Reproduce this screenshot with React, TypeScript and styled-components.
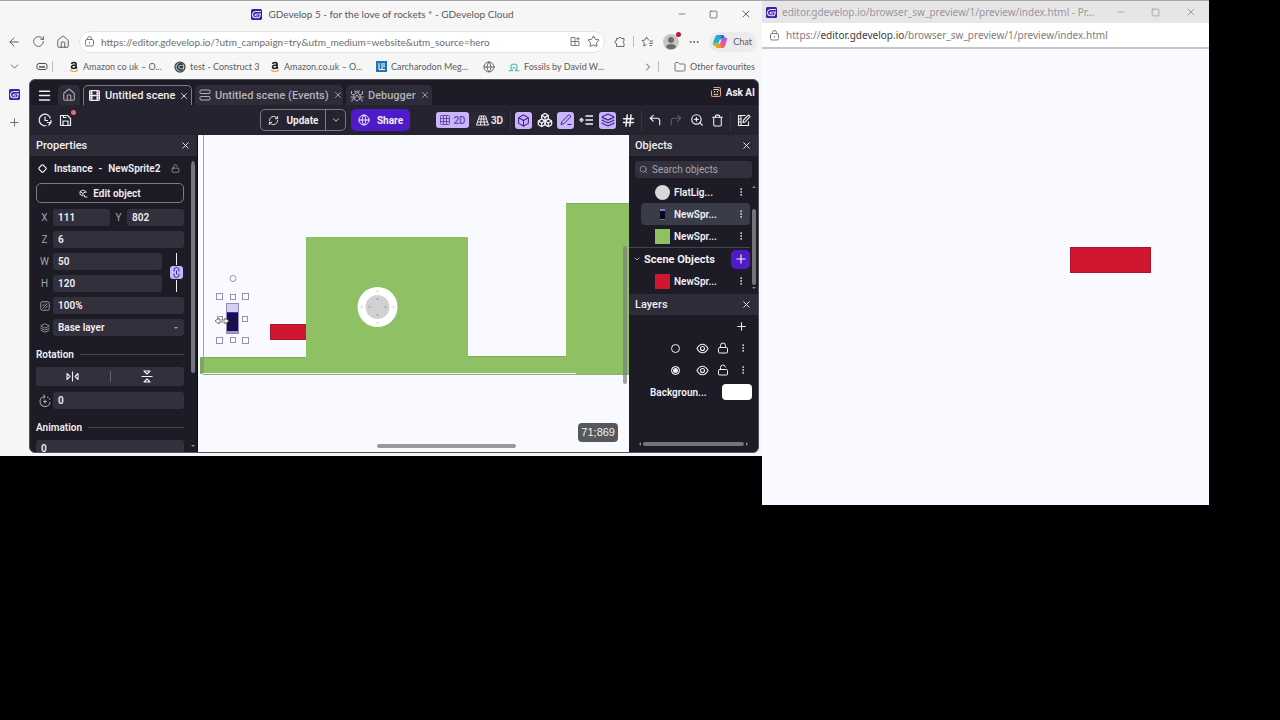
import React from "react";
import styled, { createGlobalStyle, css } from "styled-components";
import {
  Menu, House, Film, X, ChevronDown, ChevronRight, Globe, Grid3x3, Box, Boxes, Layers, Hash,
  CornerUpLeft, CornerUpRight, ZoomIn, Trash, Plus, Lock, LockOpen, Search, Star, ArrowLeft,
  RotateCw, Folder, Square, Minus, RefreshCw, EllipsisVertical, Ellipsis, Diamond,
} from "lucide-react";

const c = {
  chrome: "#f6f6f7",
  chromeText: "#5b5b5e",
  panel: "#1d1b26",
  bar: "#25232f",
  header: "#2e2c38",
  field: "#32303c",
  text: "#f0eff5",
  muted: "#a5a3ae",
  line: "#46444f",
  lilac: "#c9b6fa",
  purple: "#4f1bc9",
  ink: "#43228c",
  green: "#8fc063",
  red: "#d11730",
  scene: "#f9faff",
};

const Global = createGlobalStyle`
  *, *::before, *::after { box-sizing: border-box; }
  body { margin: 0; background: #000; font-family: "Noto Sans", sans-serif; }
  button, input, select { font: inherit; color: inherit; margin: 0; }
  button { border: 0; padding: 0; background: none; display: inline-flex; align-items: center; justify-content: center; }
  h1, h2, h3 { margin: 0; font: inherit; }
  svg { display: block; flex: none; }
  a { color: inherit; text-decoration: none; }
`;

/* ---------- desktop and windows ---------- */

const Desktop = styled.main`
  display: flex;
  align-items: flex-start;
  min-height: 100vh;
  background: #000;
`;
const EditorWindow = styled.section`
  flex: 762 1 0;
  min-width: 0;
  background: ${c.chrome};
  border-top: 1px solid #a8a5a8;
  color: ${c.chromeText};
  font-family: Lato, "Noto Sans", sans-serif;
`;
const PreviewWindow = styled.section`
  flex: 447 1 0;
  min-width: 0;
  background: ${c.scene};
  border-top: 1px solid #a8a5a8;
`;
const DesktopMargin = styled.div`
  flex: 71 1 0;
`;

const TitleBar = styled.header`
  display: flex;
  align-items: center;
  height: 26px;
  padding: 0 10px 0 88px;
  font-size: 10px;
`;
const TitleText = styled.h1`
  flex: 1;
  display: flex;
  align-items: center;
  justify-content: center;
  gap: 6px;
  white-space: nowrap;
  color: #58585b;
`;
const WindowButtons = styled.div<{ $gap: number }>`
  display: flex;
  gap: ${(p) => p.$gap}px;
`;
const AddressRow = styled.div`
  display: flex;
  align-items: center;
  height: 29px;
  padding: 0 5px 0 7px;
  gap: 9px;
`;
const AddressPill = styled.label`
  flex: 1;
  min-width: 0;
  display: flex;
  align-items: center;
  gap: 6px;
  height: 22px;
  padding: 0 4px;
  border: 1px solid #e4e4e6;
  border-radius: 11px;
  background: #fff;
`;
const AddressInput = styled.input`
  flex: 1;
  min-width: 0;
  border: 0;
  padding: 0;
  outline: 0;
  background: none;
  font-size: 10px;
  color: #6c6c6f;
`;
const Rule = styled.span`
  width: 1px;
  height: 11px;
  background: #bdbdc0;
`;
const ChromeGroup = styled.div<{ $gap: number }>`
  display: flex;
  align-items: center;
  gap: ${(p) => p.$gap}px;
`;
const Avatar = styled.button`
  position: relative;
  width: 16px;
  height: 16px;
  border-radius: 8px;
  background: #c9c7c6;
  overflow: visible;
`;
const Dot = styled.span<{ $color: string }>`
  position: absolute;
  top: -2px;
  right: -2px;
  width: 5px;
  height: 5px;
  border-radius: 3px;
  background: ${(p) => p.$color};
`;
const ChatButton = styled.button`
  height: 20px;
  padding: 0 5px 0 3px;
  gap: 5px;
  border-radius: 10px;
  background: #ebebec;
  font-size: 9px;
`;
const Bookmarks = styled.nav`
  display: flex;
  align-items: center;
  height: 23px;
  padding: 0 12px 2px 8px;
  font-size: 9px;
  white-space: nowrap;
`;
const Bookmark = styled.a<{ $width: number }>`
  display: flex;
  align-items: center;
  gap: 4px;
  flex: ${(p) => p.$width} 0 0;
  min-width: 0;
`;
const WindowBody = styled.div`
  display: flex;
  padding: 0 3px 3px 0;
`;
const VerticalTabs = styled.nav`
  width: 29px;
  display: flex;
  flex-direction: column;
  align-items: center;
  gap: 16px;
  padding-top: 10px;
`;

/* ---------- editor ---------- */

const Editor = styled.div`
  flex: 1;
  min-width: 0;
  display: flex;
  flex-direction: column;
  height: 374px;
  border: 1px solid #53515a;
  border-radius: 6px;
  overflow: hidden;
  background: ${c.panel};
  color: ${c.text};
  font-family: Roboto, "Noto Sans", sans-serif;
  font-size: 10px;
  font-weight: 600;
`;
const TabsRow = styled.div`
  display: flex;
  align-items: flex-end;
  height: 25px;
  gap: 3px;
  padding-left: 3px;
  font-size: 11px;
  font-weight: 500;
`;
const IconTab = styled.button<{ $tab?: boolean }>`
  width: 22px;
  height: 20px;
  border-radius: 5px 5px 0 0;
  background: ${(p) => (p.$tab ? c.header : "none")};
  color: ${(p) => (p.$tab ? c.muted : c.text)};
`;
const Tab = styled.div<{ $active?: boolean; $width: number }>`
  display: flex;
  align-items: center;
  width: ${(p) => p.$width}px;
  height: 20px;
  padding: 0 4px;
  gap: 4px;
  border-radius: 5px 5px 0 0;
  white-space: nowrap;
  background: ${(p) => (p.$active ? c.bar : c.header)};
  color: ${(p) => (p.$active ? c.text : "#b3b1bc")};
  ${(p) => p.$active && css`border: 1px solid #7c7a86; border-bottom: 0;`}
`;
const TabLabel = styled.button`
  flex: 1;
  justify-content: flex-start;
  gap: 4px;
`;
const AskAi = styled.button`
  margin: 0 3px 7px auto;
  gap: 4px;
  font-size: 10px;
  font-weight: 700;
`;
const Toolbar = styled.div`
  display: flex;
  align-items: center;
  height: 30px;
  padding: 0 6px 0 6px;
  background: ${c.bar};
`;
const ToolGroup = styled.div<{ $gap?: number; $push?: boolean }>`
  display: flex;
  align-items: center;
  gap: ${(p) => p.$gap ?? 4}px;
  ${(p) => p.$push && css`margin-left: auto;`}
`;
const ToolButton = styled.button<{ $on?: boolean; $dim?: boolean }>`
  position: relative;
  width: 17px;
  height: 17px;
  border-radius: 3px;
  background: ${(p) => (p.$on ? c.lilac : "none")};
  color: ${(p) => (p.$on ? c.ink : p.$dim ? "#5d5b66" : c.text)};
`;
const UpdateGroup = styled.div`
  display: flex;
  align-items: center;
  height: 22px;
  border: 1px solid #7c7a86;
  border-radius: 5px;
  font-weight: 700;
`;
const UpdateButton = styled.button`
  width: 64px;
  height: 20px;
  gap: 8px;
`;
const UpdateMenu = styled.button`
  width: 20px;
  height: 20px;
  border-left: 1px solid #7c7a86;
`;
const ShareButton = styled.button`
  width: 59px;
  height: 22px;
  gap: 7px;
  margin-left: 5px;
  border-radius: 5px;
  background: ${c.purple};
  font-weight: 700;
`;
const ModeGroup = styled.div`
  display: flex;
  gap: 4px;
  margin-left: 26px;
  border-radius: 4px;
  background: #2a2833;
`;
const ModeButton = styled.button<{ $on?: boolean }>`
  width: 33px;
  height: 16px;
  gap: 2px;
  border-radius: 3px;
  background: ${(p) => (p.$on ? c.lilac : "none")};
  color: ${(p) => (p.$on ? "#6b4fa8" : c.text)};
`;
const ToolRule = styled.span`
  width: 1px;
  height: 21px;
  margin: 0 4px;
  background: #36343f;
`;

const Workspace = styled.div`
  flex: 1;
  min-height: 0;
  display: flex;
`;
const SidePanel = styled.aside<{ $width: number }>`
  flex: none;
  display: flex;
  flex-direction: column;
  width: ${(p) => p.$width}px;
  overflow: hidden;
`;
const PanelHeader = styled.header`
  flex: none;
  display: flex;
  align-items: center;
  justify-content: space-between;
  height: 21px;
  padding: 0 6px;
  background: ${c.header};
  font-size: 11px;
  font-weight: 500;
`;
const PanelBody = styled.div`
  flex: 1;
  min-height: 0;
  display: flex;
`;
const Properties = styled.div`
  flex: 1;
  min-width: 0;
  display: flex;
  flex-direction: column;
  gap: 6px;
  padding: 4px 5px 0 6px;
  overflow: hidden;
`;
const InstanceRow = styled.div`
  flex: none;
  display: flex;
  align-items: center;
  height: 17px;
  gap: 7px;
  padding: 0 4px 0 2px;
`;
const InstanceName = styled.span`
  flex: 1;
  display: flex;
  gap: 6px;
`;
const EditObject = styled.button`
  flex: none;
  height: 20px;
  gap: 5px;
  border: 1px solid #7c7a86;
  border-radius: 5px;
`;
const Fields = styled.div`
  flex: none;
  display: grid;
  gap: 5px;
`;
const Field = styled.label`
  display: flex;
  align-items: center;
  flex: 1;
  min-width: 0;
`;
const FieldName = styled.span`
  flex: none;
  display: flex;
  justify-content: center;
  width: 17px;
  color: ${c.muted};
  font-weight: 400;
`;
const boxStyle = css`
  flex: 1;
  min-width: 0;
  width: 100%;
  height: 17px;
  padding: 0 5px;
  border: 0;
  border-radius: 3px;
  outline: 0;
  background: ${c.field};
  color: ${c.text};
`;
const Input = styled.input`${boxStyle}`;
const SelectWrap = styled.span`
  position: relative;
  display: flex;
  flex: 1;
`;
const Select = styled.select`
  ${boxStyle}
  appearance: none;
`;
const Caret = styled.span`
  position: absolute;
  right: 6px;
  top: 8px;
  border: 2px solid transparent;
  border-top-color: ${c.muted};
`;
const FieldRow = styled.div`
  display: flex;
`;
const SizeBlock = styled.div`
  display: flex;
  gap: 6px;
`;
const SizeFields = styled.div`
  flex: 1;
  min-width: 0;
  display: grid;
  gap: 5px;
`;
const RatioLink = styled.div`
  display: flex;
  flex-direction: column;
  align-items: center;
  justify-content: center;
  gap: 1px;
  width: 16px;
`;
const RatioLine = styled.span`
  width: 1px;
  height: 12px;
  background: ${c.text};
`;
const RatioButton = styled.button`
  width: 13px;
  height: 13px;
  border-radius: 3px;
  background: ${c.lilac};
  color: ${c.ink};
`;
const SectionTitle = styled.h3`
  flex: none;
  display: flex;
  align-items: center;
  gap: 6px;
  height: 14px;
  margin-top: 5px;
  &::after { content: ""; flex: 1; height: 1px; background: ${c.line}; }
`;
const FlipRow = styled.div`
  display: flex;
  align-items: center;
  flex: none;
  height: 19px;
  border-radius: 3px;
  background: ${c.field};
`;
const FlipButton = styled.button`
  flex: 1;
  height: 19px;
`;
const FlipRule = styled.span`
  width: 1px;
  height: 11px;
  background: #65636f;
`;
const ScrollTrack = styled.div`
  display: flex;
  flex-direction: column;
  align-items: center;
  justify-content: space-between;
  width: 8px;
  padding: 3px 2px;
`;
const Thumb = styled.span<{ $length: number; $top?: number }>`
  width: 4px;
  height: ${(p) => p.$length}px;
  margin-top: ${(p) => p.$top ?? 0}px;
  border-radius: 2px;
  background: #75747a;
`;
const Arrow = styled.span<{ $dir: "up" | "down" | "left" | "right" }>`
  border: 2px solid transparent;
  border-${(p) => ({ up: "bottom", down: "top", left: "right", right: "left" })[p.$dir]}-color: #8a8891;
`;
const Spring = styled.span`
  flex: 1;
`;

const Stage = styled.div`
  position: relative;
  flex: 1;
  min-width: 0;
  overflow: hidden;
  border-left: 1px solid #0c0b12;
  background: ${c.scene};
`;
const Coordinates = styled.output`
  position: absolute;
  right: 11px;
  bottom: 10px;
  padding: 3px;
  border-radius: 4px;
  background: #565859;
  color: #f2f2f2;
  font: 11px/13px "Liberation Sans", sans-serif;
`;

const SearchBox = styled.label`
  flex: none;
  display: flex;
  align-items: center;
  gap: 4px;
  height: 17px;
  margin: 5px 6px 3px;
  padding: 0 4px;
  border-radius: 3px;
  background: ${c.field};
  color: ${c.muted};
`;
const SearchInput = styled.input`
  flex: 1;
  min-width: 0;
  border: 0;
  padding: 0;
  outline: 0;
  background: none;
  font-weight: 400;
  &::placeholder { color: ${c.muted}; opacity: 1; }
`;
const ListBody = styled.div`
  flex: none;
  display: flex;
  height: 113px;
`;
const ObjectList = styled.div`
  flex: 1;
  min-width: 0;
`;
const ObjectRow = styled.div<{ $selected?: boolean }>`
  display: flex;
  align-items: center;
  gap: 4px;
  height: 22px;
  margin-left: 12px;
  padding: 0 4px 0 14px;
  border-radius: 4px;
  background: ${(p) => (p.$selected ? "#3b3c4a" : "none")};
`;
const ObjectName = styled.span`
  flex: 1;
`;
const Swatch = styled.span<{ $color: string; $round?: boolean }>`
  width: 15px;
  height: 15px;
  border-radius: ${(p) => (p.$round ? 8 : 0)}px;
  background: ${(p) => p.$color};
`;
const GroupRow = styled.div`
  display: flex;
  align-items: center;
  gap: 3px;
  height: 23px;
  padding-left: 4px;
  border-top: 1px solid ${c.line};
  font-size: 11px;
  font-weight: 700;
`;
const AddButton = styled.button`
  width: 19px;
  height: 19px;
  margin-left: auto;
  border-radius: 5px;
  background: ${c.purple};
`;
const MoreButton = styled.button`
  width: 11px;
  height: 15px;
`;
const LayerRow = styled.div`
  display: flex;
  align-items: center;
  justify-content: flex-end;
  gap: 8px;
  height: 22px;
  padding-right: 10px;
`;
const LayerRadio = styled.input`
  appearance: none;
  width: 9px;
  height: 9px;
  margin-right: 8px;
  border: 1px solid ${c.text};
  border-radius: 5px;
  &:checked { box-shadow: inset 0 0 0 1px ${c.panel}; background: ${c.text}; }
`;
const BackgroundRow = styled.label`
  display: flex;
  align-items: center;
  justify-content: space-between;
  height: 22px;
  padding: 0 6px 0 21px;
`;
const ColorInput = styled.input`
  appearance: none;
  width: 30px;
  height: 16px;
  padding: 0;
  border: 0;
  border-radius: 4px;
  overflow: hidden;
  background: #fff;
  &::-webkit-color-swatch-wrapper { padding: 0; }
  &::-webkit-color-swatch { border: 0; }
`;
const HorizontalScroll = styled.div`
  display: flex;
  align-items: center;
  gap: 2px;
  margin-top: auto;
  padding: 0 8px 6px;
`;
const HorizontalThumb = styled.span`
  flex: 1;
  height: 4px;
  border-radius: 2px;
  background: #75747a;
`;

/* ---------- preview ---------- */

const PreviewTitle = styled.header`
  display: flex;
  align-items: center;
  gap: 5px;
  height: 22px;
  padding: 0 12px 0 4px;
  background: #e6e6e7;
  color: #98989b;
  font-size: 10px;
  white-space: nowrap;
`;
const PreviewTitleText = styled.h1`
  flex: 1;
`;
const PreviewAddress = styled.div`
  display: flex;
  align-items: center;
  gap: 6px;
  height: 26px;
  padding: 0 7px;
  border-bottom: 2px solid #c4c5c6;
  background: #fff;
  color: #7c7c7f;
  font-size: 10px;
  white-space: nowrap;
`;
const Host = styled.b`
  color: #3c3c3e;
  font-weight: 400;
`;
const PreviewStage = styled.div`
  display: flex;
  height: 456px;
  padding: 198px 13% 0 0;
  justify-content: flex-end;
`;
const RedBlock = styled.div`
  width: 81px;
  height: 26px;
  border: 1px solid #a8152a;
  background: ${c.red};
`;

/* ---------- drawings ---------- */

const Logo = () => (
  <svg width="11" height="11" viewBox="0 0 22 22">
    <rect width="22" height="22" rx="3" fill="#3c1ba5" />
    <path d="M20 5H10C5.500 5 3 8 3 11.500 3 15 5.500 17.500 9 17.500h5c2 0 3.200-1 3.700-3l1.100-4.500H12c-2.500 0-4 .8-4 2.200 0 1.600 1.500 1.800 3 1.800h3" fill="none" stroke="#e8e0ff" strokeWidth="2.200" />
  </svg>
);
const Bag = () => (
  <svg width="11" height="11" viewBox="0 0 22 22" fill="none" stroke="#6d6d70" strokeWidth="1.800">
    <rect x="3" y="7" width="16" height="13" rx="3" /><path d="M7 7V5a4 4 0 0 1 8 0v2M11 12v3" />
  </svg>
);
const PuzzlePiece = () => (
  <svg width="12" height="12" viewBox="0 0 24 24" fill="none" stroke="#5b5b5e" strokeWidth="1.800" strokeLinejoin="round">
    <path d="M5 5h4a3.200 3.200 0 0 1 6 0h5v5a3 3 0 0 0 0 5v6H5v-6a3 3 0 0 1 0-6z" />
  </svg>
);
const Amazon = () => (
  <svg width="10" height="12" viewBox="0 0 20 24" fill="none">
    <path d="M5 6c1-4 9-4 9 0v7l2 2M14 8c-6 0-9 1-9 4 0 4 6 4 9 0" stroke="#1b1b1b" strokeWidth="3.200" />
    <path d="M2 18c5 4 11 4 16 0" stroke="#f0a13c" strokeWidth="2.500" />
  </svg>
);
const Construct = () => (
  <svg width="12" height="12" viewBox="0 0 24 24" fill="none">
    <circle cx="12" cy="12" r="10" fill="#b9cccf" stroke="#3d474b" strokeWidth="2.500" />
    <path d="M17 7.500a6 6 0 1 0 0 9" stroke="#2c383c" strokeWidth="3" />
    <path d="M11 9.500h7v5h-7z" fill="#2c383c" />
  </svg>
);
const Shark = () => (
  <svg width="11" height="11" viewBox="0 0 22 22" fill="none">
    <rect width="22" height="22" fill="#2074b8" />
    <path d="M6 4v13h4M12 4v13M16 4v9M10 17h8" stroke="#fff" strokeWidth="2" />
  </svg>
);
const Fossil = () => (
  <svg width="12" height="10" viewBox="0 0 24 20" fill="none" stroke="#60c4b4" strokeWidth="2.500">
    <path d="M1 17h9c-6-3-6-13 2-13s8 10 2 13h9M9 11h6" />
  </svg>
);
const Battery = () => (
  <svg width="12" height="9" viewBox="0 0 24 18" fill="none" stroke="#4d4d50" strokeWidth="2">
    <rect x="2" y="3" width="20" height="12" rx="4" /><path d="M6 10h12" strokeWidth="3" />
  </svg>
);
const Apps = () => (
  <svg width="11" height="11" viewBox="0 0 22 22" fill="none" stroke="#6d6d70" strokeWidth="1.800">
    <path d="M10 3H2v16h16v-8H2M10 3v16M16 2v7M12.500 5.500h7" />
  </svg>
);
const FavStar = () => (
  <svg width="13" height="12" viewBox="0 0 26 24" fill="none" stroke="#5b5b5e" strokeWidth="1.800" strokeLinejoin="round">
    <path d="M16 8l-2-1-3-5-3 6-6 1 4.500 4.500L5.500 20l5.500-3M17 10h7M16 14.500h8M17 19h5" />
  </svg>
);
const Copilot = () => (
  <svg width="16" height="15" viewBox="0 0 32 30">
    <path d="M12 2h9c2 0 3 1 3.500 3l1 4h-5c-2 0-3 1-3.500 3l-1 3-4-9c0-2 0-3-4-3z" fill="#2358c9" />
    <path d="M12 2c-4 0-5 2-6 5L2 18c-1 3 0 5 3 5h5c2 0 3-1 4-4l4-12c.6-2 1.500-3 3-3z" fill="#28a7d9" />
    <path d="M2 18c-1 3 0 5 3 5h5c2 0 3-1 4-4l1-3z" fill="#93c83e" />
    <path d="M20 28c4 0 5-2 6-5l4-11c1-3 0-5-3-5h-5c-2 0-3 1-4 4l-4 12c-.6 2-1.500 3-3 3z" fill="#b959dd" />
    <path d="M20 28c4 0 5-2 6-5l2-6H16l-2 6c-.6 2-1.500 3-3 3z" fill="#ee5f74" />
    <path d="M20 28h-9c-2 0-3-1-3.500-3L7 23h3c2 0 3-1 4-4l2-4 1 6c0 2 0 4 3 7z" fill="#f3903c" />
    <path d="M15.500 11h3L16 19h-3z" fill="#ebebec" />
  </svg>
);
const Person = () => (
  <svg width="16" height="16" viewBox="0 0 16 16" fill="#6c6a6a"><circle cx="8" cy="6" r="3" /><path d="M3 13c0-4 10-4 10 0-2 3-8 3-10 0z" /></svg>
);
const EventsIcon = () => (
  <svg width="12" height="12" viewBox="0 0 24 24" fill="none" stroke="currentColor" strokeWidth="2">
    <rect x="2" y="2" width="20" height="7" rx="2" /><rect x="2" y="15" width="20" height="7" rx="2" />
  </svg>
);
const DebugIcon = () => (
  <svg width="14" height="13" viewBox="0 0 28 26" fill="none" stroke="currentColor" strokeWidth="2">
    <path d="M14 7l6 5v6c-2 7-10 7-12 0v-6zM10 8c0-5 8-5 8 0M9 3l2 3M19 3l-2 3M8 12L3 10V4M8 16H1M8 19l-4 2v4M20 12l5-2V4M20 16h7M20 19l4 2v4M8 20l6-8 6 8" />
  </svg>
);
const HistoryIcon = () => (
  <svg width="14" height="14" viewBox="0 0 28 28" fill="none" stroke="currentColor" strokeWidth="2.400">
    <path d="M25 11A11.500 11.500 0 1 0 17 25M14 7v8h6M18 19h8M26 14v5l-5 6" />
  </svg>
);
const SaveIcon = () => (
  <svg width="13" height="13" viewBox="0 0 26 26" fill="none" stroke="currentColor" strokeWidth="2.400" strokeLinejoin="round">
    <path d="M3 3h14l6 6v14H3zM8 23v-9h10v9M9 3v4h6" />
  </svg>
);
const RobotIcon = () => (
  <svg width="12" height="12" viewBox="0 0 24 24" fill="none" strokeWidth="2.200">
    <path d="M7 3h11a3 3 0 0 1 3 3v12a3 3 0 0 1-3 3H6a3 3 0 0 1-3-3V9" stroke="#e39a86" />
    <path d="M7 7h8a3 3 0 0 1 3 3M9 10v3M15 10v3M8 16c2 2 6 2 8 0" stroke="#f4c6a8" />
  </svg>
);
const Floor3D = () => (
  <svg width="13" height="11" viewBox="0 0 26 22" fill="none" stroke="currentColor" strokeWidth="2">
    <path d="M7 2h12l6 18H1zM5 8h16M3 14h20M11 2L9 20M15 2l2 18" />
  </svg>
);
const PenIcon = () => (
  <svg width="14" height="14" viewBox="0 0 28 28" fill="none" stroke="currentColor" strokeWidth="2">
    <path d="M4 23l2-6L19 4c3-1 5 2 4 4L10 21zM17 23h8" />
  </svg>
);
const InstancesIcon = () => (
  <svg width="15" height="12" viewBox="0 0 30 24" fill="none" stroke="currentColor" strokeWidth="2.600">
    <path d="M13 4h15M13 12h15M13 20h15M5 9l3 3-3 3-3-3z" />
  </svg>
);
const SceneEdit = () => (
  <svg width="14" height="13" viewBox="0 0 28 26" fill="none" stroke="currentColor" strokeWidth="2.200">
    <path d="M17 3H3v20h20v-8M8 3v20M3 10h5M3 16h5M12 17l1-5L23 2l3 3-10 11z" />
  </svg>
);
const ObjectEdit = () => (
  <svg width="9" height="9" viewBox="0 0 18 18" fill="none" stroke="currentColor" strokeWidth="1.800">
    <path d="M8 14l-6-3V5l6-3 6 3v3M2 5l6 4 6-4M8 9v5M11 16h6M11 12v4" />
  </svg>
);
const OpacityIcon = () => (
  <svg width="10" height="10" viewBox="0 0 20 20" fill="none" stroke="currentColor" strokeWidth="1.800">
    <rect x="1.500" y="1.500" width="17" height="17" rx="3" /><path d="M5 15L15 5M10 15l5-5M5 10l5-5" />
  </svg>
);
const AngleIcon = () => (
  <svg width="12" height="13" viewBox="0 0 24 26" fill="none" stroke="currentColor" strokeWidth="2.200">
    <path d="M12 5a10 10 0 1 0 10 11M12 5L9 1M12 5L9 9M12 11v8M8 15h8" />
    <path d="M16 6a10 10 0 0 1 6 6" strokeDasharray="3 2" />
  </svg>
);
const FlipH = () => (
  <svg width="13" height="11" viewBox="0 0 26 22" fill="none" stroke="currentColor" strokeWidth="2.200" strokeLinejoin="round">
    <path d="M13 1v20M2 5l6 6-6 6zM24 5l-6 6 6 6z" />
  </svg>
);
const FlipV = () => (
  <svg width="12" height="13" viewBox="0 0 24 26" fill="none" stroke="currentColor" strokeWidth="2.200" strokeLinejoin="round">
    <path d="M1 13h22M6 2h12l-6 6zM6 24h12l-6-6z" />
  </svg>
);
const ChainIcon = () => (
  <svg width="9" height="11" viewBox="0 0 18 22" fill="none" stroke="currentColor" strokeWidth="2">
    <path d="M4 9V6a4 4 0 0 1 10 0v3M4 13v3a4 4 0 0 0 10 0v-3M9 7v8" />
  </svg>
);
const EyeIcon = () => (
  <svg width="13" height="11" viewBox="0 0 26 22" fill="none" stroke="currentColor" strokeWidth="2.200">
    <path d="M2 11c3-6 7-8.500 11-8.500S21 5 24 11c-3 6-7 8.500-11 8.500S5 17 2 11z" /><circle cx="13" cy="11" r="4" />
  </svg>
);
const PhoneSprite = () => (
  <svg width="15" height="15" viewBox="0 0 15 15">
    <path d="M5 3h5v10H5z" fill="#06061a" /><path d="M5 2h5v2H5z" fill="#6c83d8" /><path d="M5 12h5v1H5z" fill="#79766a" />
  </svg>
);

const cornerHandles = [[18, 158], [44, 158], [18, 202], [44, 202]];
const sideHandles = [[32, 159], [19, 181], [44, 181], [32, 202]];

const SceneDrawing = () => (
  <svg width="431" height="317" viewBox="0 0 431 317" role="img" aria-label="Scene">
    <path d="M5.500 0v239" stroke="#a3a0aa" />
    <path d="M2 222h106V102h162v119h98V68h63v171H2z" fill={c.green} />
    <path d="M2 222h4v16H2z" fill="#7aa860" />
    <path d="M2 222.500h106M270 221.500h98M368 68.500h63" stroke="#7db053" />
    <path d="M5 238.500h373" stroke="#f2f7ec" />
    <path d="M5 239.500h426" stroke="#8ea980" />
    <rect x="72.500" y="189.500" width="36" height="15" fill={c.red} stroke="#a8152a" />
    <path d="M108 180h6v30h-6z" fill={c.green} />
    <circle cx="179.500" cy="172" r="20" fill="#fff" />
    <circle cx="179.500" cy="172" r="12" fill="#d0d1d2" />
    <g fill="#a0a1a3">
      <circle cx="179.500" cy="164" r="1" /><circle cx="179.500" cy="180" r="1" />
      <circle cx="171.500" cy="172" r="1" /><circle cx="187.500" cy="172" r="1" />
    </g>
    <g fill="#d0d1d2">
      <circle cx="179.500" cy="156" r="1" /><circle cx="179.500" cy="188" r="1" />
      <circle cx="163.500" cy="172" r="1" /><circle cx="195.500" cy="172" r="1" />
    </g>
    <rect x="29" y="168" width="12" height="30" fill="#17104a" />
    <rect x="29" y="168" width="12" height="9" fill="#d3cef2" />
    <path d="M29 177.500h12" stroke="#3a2ee0" />
    <rect x="29" y="196" width="12" height="2" fill="#9b96c4" />
    <rect x="28.500" y="168.500" width="12" height="30" fill="none" stroke="#8f89c4" />
    <g fill="#fbfbff" stroke="#9490ba">
      {cornerHandles.map(([x, y]) => <rect key={`${x}-${y}`} x={x + 0.5} y={y + 0.5} width="6" height="6" />)}
      {sideHandles.map(([x, y]) => <rect key={`${x}-${y}`} x={x + 0.5} y={y + 0.5} width="5" height="5" />)}
      <circle cx="35" cy="143.500" r="3" />
    </g>
    <path d="M17 186l4-3v2h6v-2l4 3-4 3v-2h-6v2z" fill="#fff" stroke="#555" strokeWidth="0.800" />
    <rect x="425" y="111" width="4" height="138" rx="2" fill="#7a7d80" opacity="0.700" />
    <rect x="179" y="309" width="139" height="4" rx="2" fill="#98999c" />
  </svg>
);

const More = ({ label }: { label: string }) => (
  <MoreButton aria-label={label}><EllipsisVertical size={10} strokeWidth={2} /></MoreButton>
);

const TextField = ({ name, label, value }: { name: React.ReactNode; label: string; value: string }) => (
  <Field>
    <FieldName>{name}</FieldName>
    <Input aria-label={label} defaultValue={value} />
  </Field>
);

const Controls = ({ gap }: { gap: number }) => (
  <WindowButtons $gap={gap}>
    <button aria-label="Minimise"><Minus size={10} strokeWidth={1.8} /></button>
    <button aria-label="Maximise"><Square size={9} strokeWidth={2} /></button>
    <button aria-label="Close"><X size={12} strokeWidth={1.8} /></button>
  </WindowButtons>
);

/* ---------- panels ---------- */

const PropertiesPanel = () => (
  <SidePanel $width={167}>
    <PanelHeader><h2>Properties</h2><button aria-label="Close properties"><X size={11} /></button></PanelHeader>
    <PanelBody>
      <Properties>
        <InstanceRow>
          <Diamond size={9} strokeWidth={3} />
          <InstanceName><span>Instance</span><span>-</span><span>NewSprite2</span></InstanceName>
          <button aria-label="Lock instance"><LockOpen size={9} color={c.muted} /></button>
        </InstanceRow>
        <EditObject><ObjectEdit />Edit object</EditObject>
        <Fields>
          <FieldRow>
            <TextField name="X" label="X" value="111" />
            <TextField name="Y" label="Y" value="802" />
          </FieldRow>
          <TextField name="Z" label="Z" value="6" />
          <SizeBlock>
            <SizeFields>
              <TextField name="W" label="Width" value="50" />
              <TextField name="H" label="Height" value="120" />
            </SizeFields>
            <RatioLink>
              <RatioLine />
              <RatioButton aria-label="Keep ratio"><ChainIcon /></RatioButton>
              <RatioLine />
            </RatioLink>
          </SizeBlock>
          <TextField name={<OpacityIcon />} label="Opacity" value="100%" />
          <Field>
            <FieldName><Layers size={10} /></FieldName>
            <SelectWrap>
              <Select aria-label="Layer"><option>Base layer</option></Select>
              <Caret />
            </SelectWrap>
          </Field>
        </Fields>
        <SectionTitle>Rotation</SectionTitle>
        <FlipRow>
          <FlipButton aria-label="Flip horizontally"><FlipH /></FlipButton>
          <FlipRule />
          <FlipButton aria-label="Flip vertically"><FlipV /></FlipButton>
        </FlipRow>
        <Fields><TextField name={<AngleIcon />} label="Angle" value="0" /></Fields>
        <SectionTitle>Animation</SectionTitle>
        <Fields><Input aria-label="Animation" defaultValue="0" /></Fields>
      </Properties>
      <ScrollTrack>
        <Arrow $dir="up" />
        <Thumb $length={210} />
        <Spring />
        <Arrow $dir="down" />
      </ScrollTrack>
    </PanelBody>
  </SidePanel>
);

const ObjectsPanel = () => (
  <SidePanel $width={129}>
    <PanelHeader><h2>Objects</h2><button aria-label="Close objects"><X size={11} /></button></PanelHeader>
    <SearchBox>
      <Search size={9} />
      <SearchInput aria-label="Search objects" placeholder="Search objects" />
    </SearchBox>
    <ListBody>
      <ObjectList>
        <ObjectRow><Swatch $color="#d8d8d8" $round /><ObjectName>FlatLig...</ObjectName><More label="FlatLight menu" /></ObjectRow>
        <ObjectRow $selected><PhoneSprite /><ObjectName>NewSpr...</ObjectName><More label="Sprite menu" /></ObjectRow>
        <ObjectRow><Swatch $color={c.green} /><ObjectName>NewSpr...</ObjectName><More label="Ground menu" /></ObjectRow>
        <GroupRow>
          <ChevronDown size={8} />Scene Objects
          <AddButton aria-label="Add object"><Plus size={14} /></AddButton>
        </GroupRow>
        <ObjectRow><Swatch $color={c.red} /><ObjectName>NewSpr...</ObjectName><More label="Platform menu" /></ObjectRow>
      </ObjectList>
      <ScrollTrack>
        <Arrow $dir="up" />
        <Thumb $length={76} $top={18} />
        <Arrow $dir="down" />
      </ScrollTrack>
    </ListBody>
    <PanelHeader><h2>Layers</h2><button aria-label="Close layers"><X size={11} /></button></PanelHeader>
    <LayerRow><button aria-label="Add layer"><Plus size={13} /></button></LayerRow>
    <LayerRow>
      <LayerRadio type="radio" name="layer" aria-label="Top layer" />
      <button aria-label="Show top layer"><EyeIcon /></button>
      <button aria-label="Lock top layer"><Lock size={12} /></button>
      <More label="Top layer menu" />
    </LayerRow>
    <LayerRow>
      <LayerRadio type="radio" name="layer" aria-label="Base layer" defaultChecked />
      <button aria-label="Show base layer"><EyeIcon /></button>
      <button aria-label="Lock base layer"><LockOpen size={12} /></button>
      <More label="Base layer menu" />
    </LayerRow>
    <BackgroundRow>Backgroun...<ColorInput type="color" defaultValue="#ffffff" /></BackgroundRow>
    <HorizontalScroll><Arrow $dir="left" /><HorizontalThumb /><Arrow $dir="right" /></HorizontalScroll>
  </SidePanel>
);

export default function App() {
  return (
    <>
      <Global />
      <Desktop>
        <EditorWindow>
          <TitleBar>
            <TitleText><Logo />GDevelop 5 - for the love of rockets * - GDevelop Cloud</TitleText>
            <Controls gap={22} />
          </TitleBar>
          <AddressRow>
            <ChromeGroup $gap={11}>
              <button aria-label="Back"><ArrowLeft size={14} strokeWidth={1.7} /></button>
              <button aria-label="Reload"><RotateCw size={13} strokeWidth={1.7} /></button>
              <button aria-label="Home"><House size={14} strokeWidth={1.7} /></button>
            </ChromeGroup>
            <AddressPill>
              <Bag />
              <AddressInput aria-label="Address" defaultValue="https://editor.gdevelop.io/?utm_campaign=try&utm_medium=website&utm_source=hero" />
              <Apps />
              <Star size={13} strokeWidth={1.7} />
            </AddressPill>
            <ChromeGroup $gap={7}>
              <button aria-label="Extensions"><PuzzlePiece /></button>
              <Rule />
              <button aria-label="Favourites"><FavStar /></button>
            </ChromeGroup>
            <Avatar aria-label="Profile"><Person /><Dot $color="#c11432" /></Avatar>
            <button aria-label="More"><Ellipsis size={12} /></button>
            <ChatButton><Copilot />Chat</ChatButton>
          </AddressRow>
          <Bookmarks>
            <Bookmark href="#tabs" $width={28} aria-label="Tabs"><ChevronDown size={13} strokeWidth={1.7} /></Bookmark>
            <Bookmark href="#battery" $width={33} aria-label="Reader"><Battery /><Rule /></Bookmark>
            <Bookmark href="#amazon" $width={105}><Amazon />Amazon co uk – O...</Bookmark>
            <Bookmark href="#construct" $width={96}><Construct />test - Construct 3</Bookmark>
            <Bookmark href="#amazon2" $width={106}><Amazon />Amazon.co.uk – O...</Bookmark>
            <Bookmark href="#shark" $width={107}><Shark />Carcharodon Meg...</Bookmark>
            <Bookmark href="#web" $width={25} aria-label="Web"><Globe size={12} strokeWidth={1.8} /></Bookmark>
            <Bookmark href="#fossils" $width={134}><Fossil />Fossils by David W...</Bookmark>
            <Bookmark href="#more" $width={32} aria-label="More bookmarks"><ChevronRight size={12} /><Rule /></Bookmark>
            <Bookmark href="#other" $width={76}><Folder size={12} strokeWidth={1.7} />Other favourites</Bookmark>
          </Bookmarks>
          <WindowBody>
            <VerticalTabs>
              <button aria-label="GDevelop tab"><Logo /></button>
              <button aria-label="New tab"><Plus size={13} strokeWidth={1.6} /></button>
            </VerticalTabs>
            <Editor>
              <TabsRow>
                <IconTab aria-label="Menu"><Menu size={15} strokeWidth={2.4} /></IconTab>
                <IconTab $tab aria-label="Home"><House size={14} /></IconTab>
                <Tab $active $width={109}><TabLabel><Film size={13} strokeWidth={2.4} />Untitled scene</TabLabel><button aria-label="Close scene"><X size={10} /></button></Tab>
                <Tab $width={148}><TabLabel><EventsIcon />Untitled scene (Events)</TabLabel><button aria-label="Close events"><X size={10} /></button></Tab>
                <Tab $width={86}><TabLabel><DebugIcon />Debugger</TabLabel><button aria-label="Close debugger"><X size={10} /></button></Tab>
                <AskAi><RobotIcon />Ask AI</AskAi>
              </TabsRow>
              <Toolbar>
                <ToolGroup>
                  <ToolButton aria-label="History"><HistoryIcon /></ToolButton>
                  <ToolButton aria-label="Save"><SaveIcon /><Dot $color="#ee6a6a" /></ToolButton>
                </ToolGroup>
                <ToolGroup $push $gap={0}>
                  <UpdateGroup>
                    <UpdateButton><RefreshCw size={11} />Update</UpdateButton>
                    <UpdateMenu aria-label="Update options"><ChevronDown size={10} /></UpdateMenu>
                  </UpdateGroup>
                  <ShareButton><Globe size={12} />Share</ShareButton>
                  <ModeGroup>
                    <ModeButton $on><Grid3x3 size={12} />2D</ModeButton>
                    <ModeButton><Floor3D />3D</ModeButton>
                  </ModeGroup>
                </ToolGroup>
                <ToolRule />
                <ToolGroup>
                  <ToolButton $on aria-label="Objects"><Box size={13} /></ToolButton>
                  <ToolButton aria-label="Groups"><Boxes size={16} /></ToolButton>
                  <ToolButton $on aria-label="Properties"><PenIcon /></ToolButton>
                  <ToolButton aria-label="Instances"><InstancesIcon /></ToolButton>
                  <ToolButton $on aria-label="Layers"><Layers size={14} /></ToolButton>
                  <ToolButton aria-label="Grid"><Hash size={15} strokeWidth={2.4} /></ToolButton>
                </ToolGroup>
                <ToolRule />
                <ToolGroup>
                  <ToolButton aria-label="Undo"><CornerUpLeft size={14} /></ToolButton>
                  <ToolButton $dim aria-label="Redo"><CornerUpRight size={14} /></ToolButton>
                  <ToolButton aria-label="Zoom"><ZoomIn size={14} /></ToolButton>
                  <ToolButton aria-label="Delete"><Trash size={13} /></ToolButton>
                </ToolGroup>
                <ToolRule />
                <ToolButton aria-label="Scene settings"><SceneEdit /></ToolButton>
              </Toolbar>
              <Workspace>
                <PropertiesPanel />
                <Stage>
                  <SceneDrawing />
                  <Coordinates>71;869</Coordinates>
                </Stage>
                <ObjectsPanel />
              </Workspace>
            </Editor>
          </WindowBody>
        </EditorWindow>
        <PreviewWindow>
          <PreviewTitle>
            <Logo />
            <PreviewTitleText>editor.gdevelop.io/browser_sw_preview/1/preview/index.html - Pr...</PreviewTitleText>
            <Controls gap={25} />
          </PreviewTitle>
          <PreviewAddress>
            <Bag />
            <span>https://<Host>editor.gdevelop.io</Host>/browser_sw_preview/1/preview/index.html</span>
          </PreviewAddress>
          <PreviewStage><RedBlock /></PreviewStage>
        </PreviewWindow>
        <DesktopMargin />
      </Desktop>
    </>
  );
}
